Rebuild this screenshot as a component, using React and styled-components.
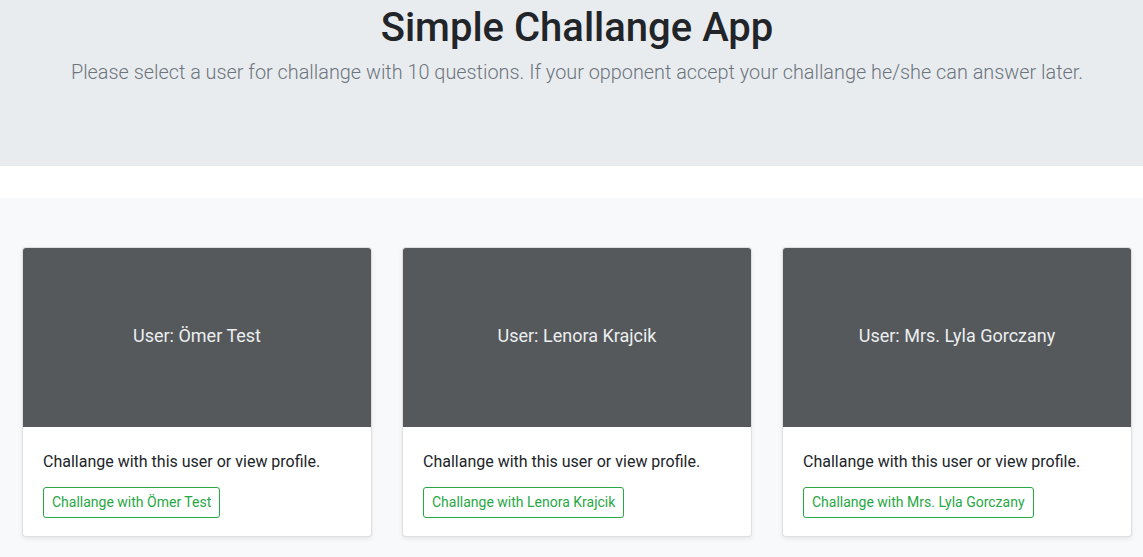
import React from "react";
import styled, { createGlobalStyle } from "styled-components";

const Global = createGlobalStyle`
  html, body { margin: 0; padding: 0; background: #fff; }
  body {
    font-family: Roboto, "Liberation Sans", sans-serif;
    font-size: 16px;
    line-height: 1.5;
    color: #212529;
    -webkit-font-smoothing: antialiased;
  }
  * { box-sizing: border-box; }
`;

const Jumbotron = styled.section`
  background: #e9ecef;
  height: 166px;
  padding-top: 4px;
  margin-bottom: 32px;
`;

const Container = styled.div`
  width: 1110px;
  margin-left: 22px;
  text-align: ${(p) => (p.$center ? "center" : "left")};
`;

const Title = styled.h1`
  margin: 0 0 6px;
  font-size: 40px;
  font-weight: 500;
  line-height: 48px;
  color: #212529;
`;

const Lead = styled.p`
  margin: 0;
  font-size: 19.85px;
  font-weight: 300;
  line-height: 30px;
  color: #6c757d;
`;

const Album = styled.main`
  background: #f8f9fa;
  padding: 49px 0 48px;
`;

const Grid = styled.div`
  display: grid;
  grid-template-columns: repeat(3, 350px);
  column-gap: 30px;
`;

const Card = styled.div`
  display: flex;
  flex-direction: column;
  background: #fff;
  border: 1px solid rgba(0, 0, 0, 0.125);
  border-radius: 4px;
  box-shadow: 0 2px 4px rgba(0, 0, 0, 0.075);
  overflow: hidden;
`;

const Thumb = styled.div`
  height: 179px;
  background: #55595c;
  color: #eceeef;
  font-size: 18px;
  display: flex;
  align-items: center;
  justify-content: center;
  padding-bottom: 4px;
`;

const Body = styled.div`
  padding: 23px 19px 18px 20px;
`;

const Text = styled.p`
  margin: 0 0 13px;
  font-size: 16px;
  line-height: 24px;
  color: #212529;
`;

const OutlineButton = styled.button`
  display: inline-block;
  font-family: inherit;
  font-size: 14px;
  line-height: 21px;
  padding: 4px 8px;
  color: #28a745;
  background: transparent;
  border: 1px solid #28a745;
  border-radius: 3px;
  cursor: pointer;
`;

const users = ["Ömer Test", "Lenora Krajcik", "Mrs. Lyla Gorczany"];

export default function App() {
  return (
    <>
      <Global />
      <Jumbotron>
        <Container $center>
          <Title>Simple Challange App</Title>
          <Lead>
            Please select a user for challange with 10 questions. If your opponent accept your challange he/she can answer later.
          </Lead>
        </Container>
      </Jumbotron>
      <Album>
        <Container>
          <Grid>
            {users.map((u) => (
              <Card key={u}>
                <Thumb>User: {u}</Thumb>
                <Body>
                  <Text>Challange with this user or view profile.</Text>
                  <OutlineButton>Challange with {u}</OutlineButton>
                </Body>
              </Card>
            ))}
          </Grid>
        </Container>
      </Album>
    </>
  );
}
